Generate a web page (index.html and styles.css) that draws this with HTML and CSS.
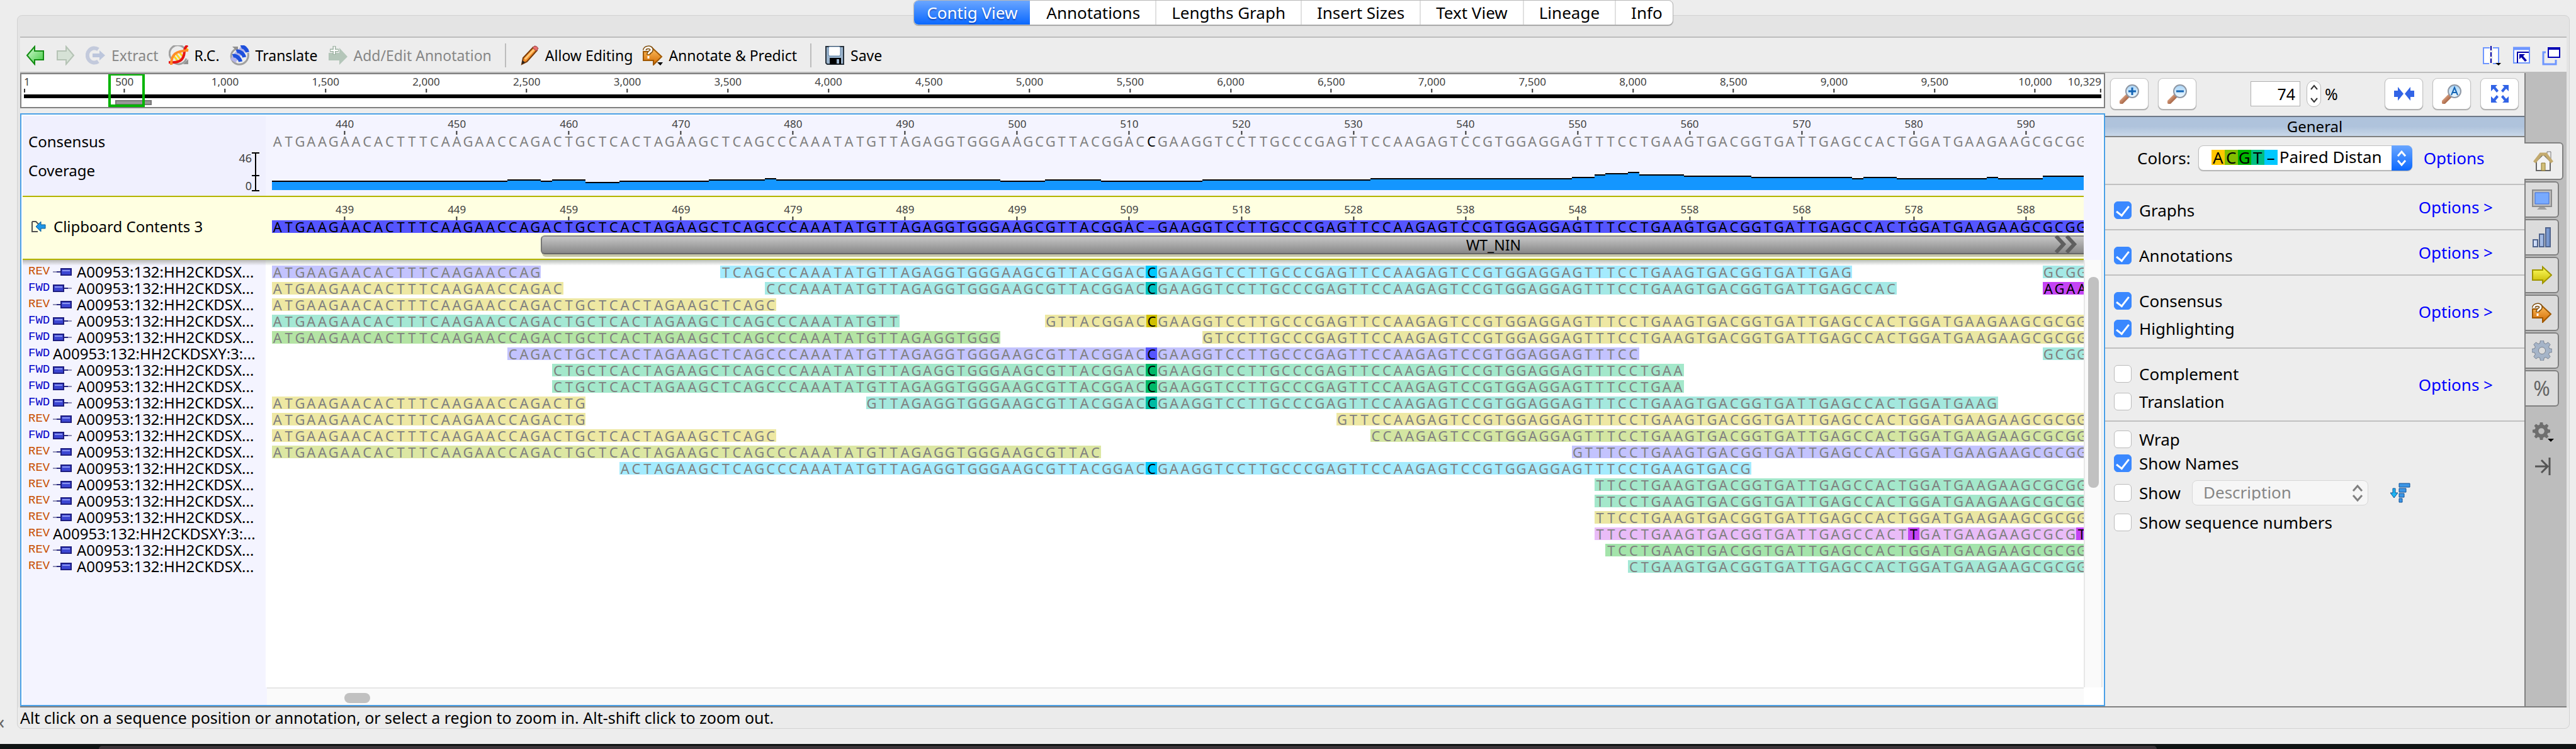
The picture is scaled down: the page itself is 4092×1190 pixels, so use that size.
FILE: index.html
```html
<!DOCTYPE html>
<html lang="en">
<head>
<meta charset="utf-8">
<title>Contig View</title>
<link rel="stylesheet" href="styles.css">
</head>
<body>
<svg class="defs" aria-hidden="true">
  <defs>
    <linearGradient id="gGreen" x1="0" y1="0" x2="1" y2="1"><stop offset="0" stop-color="#d8fbd8"/><stop offset="1" stop-color="#3cc83c"/></linearGradient>
    <linearGradient id="gOrange" x1="0" y1="0" x2="0" y2="1"><stop offset="0" stop-color="#ffc060"/><stop offset="1" stop-color="#d06800"/></linearGradient>
    <linearGradient id="gYellow" x1="0" y1="0" x2="0" y2="1"><stop offset="0" stop-color="#ffff60"/><stop offset="1" stop-color="#c8b800"/></linearGradient>
    <linearGradient id="gBlue" x1="0" y1="0" x2="1" y2="0"><stop offset="0" stop-color="#dce8ff"/><stop offset="1" stop-color="#6a8cc8"/></linearGradient>
    <linearGradient id="gLens" x1="0" y1="0" x2="0" y2="1"><stop offset="0" stop-color="#a8d4f8"/><stop offset="1" stop-color="#f0faff"/></linearGradient>
    <linearGradient id="gHandle" x1="0" y1="0" x2="1" y2="1"><stop offset="0" stop-color="#f0b898"/><stop offset="1" stop-color="#8c4828"/></linearGradient>
    <symbol id="arrow" viewBox="0 0 32 32"><path d="M3 16 15 2v7h14v14H15v7z"/></symbol>
    <symbol id="fwdRead" viewBox="0 0 30 14"><path d="M18 7h12" stroke="#8c8cb4" stroke-width="2"/><path d="M17 7h7" stroke="#282880" stroke-width="2"/><rect x="1" y="2" width="16" height="10" fill="#3c46d2" stroke="#1e1e80" stroke-width="2"/><path d="M3 5h12" stroke="#8c96f0" stroke-width="2"/></symbol>
    <symbol id="revRead" viewBox="0 0 30 14"><path d="M0 7h12" stroke="#8c8cb4" stroke-width="2"/><path d="M6 7h7" stroke="#282880" stroke-width="2"/><rect x="13" y="2" width="16" height="10" fill="#3c46d2" stroke="#1e1e80" stroke-width="2"/><path d="M15 5h12" stroke="#8c96f0" stroke-width="2"/></symbol>
    <symbol id="lens" viewBox="0 0 32 32"><path d="M3 29 14 18" stroke="url(#gHandle)" stroke-width="7" stroke-linecap="round"/><circle cx="20" cy="12" r="10" fill="url(#gLens)" stroke="#9098a4" stroke-width="2"/></symbol>
    <symbol id="gear" viewBox="0 0 32 32"><path fill-rule="evenodd" d="M13.500 0h5l.8 4.300 2.700 1.100 3.600-2.500 3.500 3.500-2.500 3.600 1.100 2.700 4.300.8v5l-4.300.8-1.100 2.700 2.500 3.600-3.500 3.500-3.600-2.500-2.700 1.100-.8 4.300h-5l-.8-4.300-2.700-1.100-3.600 2.500-3.500-3.500 2.500-3.600-1.100-2.700L0 18.500v-5l4.300-.8 1.100-2.700-2.500-3.600 3.500-3.500 3.600 2.500 2.700-1.100zM16 10.500a5.500 5.500 0 1 0 0 11 5.500 5.500 0 0 0 0-11z"/></symbol>
    <symbol id="predict" viewBox="0 0 32 32"><path d="M1 10h14V4l15 14-13 13v-7H1z" fill="url(#gOrange)" stroke="#a05800" stroke-width="2"/><path d="M3 8c0-6 11-6 11-1 0 4-5 3-5 8" fill="none" stroke="#805010" stroke-width="6"/><path d="M3 8c0-6 11-6 11-1 0 4-5 3-5 7M9 17v4" fill="none" stroke="#fff" stroke-width="3"/></symbol>
  </defs>
</svg>

<div class="window">
  <nav class="tabs" aria-label="Views">
    <button class="tab active">Contig View</button><button class="tab">Annotations</button><button class="tab">Lengths Graph</button><button class="tab">Insert Sizes</button><button class="tab">Text View</button><button class="tab">Lineage</button><button class="tab">Info</button>
  </nav>

  <main class="panel">
    <div class="toolbar">
      <button class="tool icon-only" aria-label="Back"><svg viewBox="0 0 32 32"><use href="#arrow" fill="url(#gGreen)" stroke="#148c14" stroke-width="2"/></svg></button>
      <button class="tool icon-only faded" aria-label="Forward" disabled><svg viewBox="0 0 32 32"><g transform="matrix(-1 0 0 1 32 0)"><use href="#arrow" fill="#c8dcc8" stroke="#90a890" stroke-width="2"/></g></svg></button>
      <button class="tool" disabled><svg viewBox="0 0 32 32"><path d="M20 6.500A11 11.500 0 1 0 20 25.500" fill="none" stroke="#c3cadc" stroke-width="6"/><path d="M11 13h11V8l9 8-9 8v-5H11z" fill="#bcc6dc"/></svg>Extract</button>
      <button class="tool"><svg viewBox="0 0 32 32"><path d="M4 21A13 13 0 0 1 25 5M9 28a13 13 0 0 0 19-7" fill="none" stroke="#a0a0a0" stroke-width="3"/><path d="M23 30h8v-8z" fill="#909090"/><path d="m8 17 8 10M12 14l8 10M17 11l7 9M26 3l5 5" stroke="#ffd21e" stroke-width="3"/><path d="M0 27c16 1 24-2 25-17 0-5 2-8 5-10" fill="none" stroke="#e61414" stroke-width="4"/><path d="M4 31C4 14 11 9 31 8" fill="none" stroke="#ff8c28" stroke-width="4"/></svg>R.C.</button>
      <button class="tool"><svg viewBox="0 0 32 32"><path d="M9 6C-1 12 0 26 12 30c12 2 19-8 17-18" fill="none" stroke="#a0a0a0" stroke-width="3"/><path d="M4 2h9v9z" fill="#909090"/><path d="m5 25 4-6m1-1 5-7m2-1 5-5" stroke="#b4b4e6" stroke-width="10"/><path d="M5 17c4-2 11 3 12 9M11 10c4-2 11 3 12 9M18 3c4-2 9 3 10 8" fill="none" stroke="#1e50dc" stroke-width="6"/></svg>Translate</button>
      <button class="tool" disabled><svg viewBox="0 0 32 32"><path d="M1 12h17V4l13 14-13 13v-7H1z" fill="#b4c6b9"/><path d="M10 1v14M3 8h14" stroke="#a0b4a5" stroke-width="5"/><path d="M10 2v12M4 8h12" stroke="#fff" stroke-width="2"/></svg>Add/Edit Annotation</button>
      <span class="divider"></span>
      <button class="tool"><svg viewBox="0 0 32 32"><path d="m4 30 2-10L22 3l6 5-16 18z" fill="#f08c28" stroke="#783c0a" stroke-width="2"/><path d="m9 22 15-16" stroke="#ffc878" stroke-width="3"/><path d="m21 4 3-3c3 0 5 2 6 4l-3 4z" fill="#e66e6e" stroke="#963c3c"/><path d="m4 30 1-6 4 3z" fill="#222"/></svg>Allow Editing</button>
      <button class="tool"><svg viewBox="0 0 32 32"><use href="#predict"/><path d="M23 27h9l-4 5z"/></svg>Annotate &amp; Predict</button>
      <span class="divider"></span>
      <button class="tool"><svg viewBox="0 0 32 32"><path d="M2 2h28v28H4l-2-2z" fill="#9bb4cd" stroke="#28323c" stroke-width="2"/><rect x="6" y="2" width="19" height="15" rx="2" fill="#fff" stroke="#5078a0"/><rect x="8" y="20" width="18" height="10" fill="#000"/><rect x="19" y="22" width="4" height="7" fill="#9bb4cd"/></svg>Save</button>
      <span class="spacer"></span>
      <button class="tool icon-only" aria-label="Split view"><svg viewBox="0 0 32 32"><path d="M14 4H4v25h9M19 4h9v25h-9" fill="#fff" stroke="#6e96ff" stroke-width="2"/><path d="M16 1v30" stroke="#0000aa" stroke-width="2" stroke-dasharray="7 3"/><path d="M23 28h9l-4 4z"/></svg></button>
      <button class="tool icon-only" aria-label="Expand view"><svg viewBox="0 0 32 32"><path d="M4 4h25v24H4z" fill="#fff" stroke="#6e96ff" stroke-width="2"/><path d="M3 5h27" stroke="#6e96ff" stroke-width="5"/><path d="M10 28V11h18" fill="none" stroke="#0000aa" stroke-width="2"/><path d="M13 14h9l-3 3 6 7-3 2-6-7-3 3z" fill="#0000aa"/></svg></button>
      <button class="tool icon-only" aria-label="New window"><svg viewBox="0 0 32 32"><path d="M7 11H3v19h20v-7" fill="none" stroke="#6e96ff" stroke-width="3"/><path d="M11 4h18v15H11z" fill="#fff" stroke="#0000b4" stroke-width="2"/><path d="M10 5h20" stroke="#0000b4" stroke-width="4"/></svg></button>
    </div>

    <div class="workspace">
      <div class="viewer-column">
        <div class="minimap">
          <div class="minimap-scale" id="minimapScale"></div>
          <div class="minimap-line"></div>
          <div class="minimap-annotation"></div>
          <div class="minimap-window"></div>
        </div>

        <div class="viewer">
          <div class="tracks">
            <section class="band consensus">
              <div class="names">
                <div class="name consensus-name">Consensus</div>
                <div class="coverage-name"><span class="coverage-label">Coverage</span>
                  <span class="axis-labels"><span>46</span><span>0</span></span>
                  <svg class="axis" viewBox="0 0 12 62"><path d="M6 1v60M0 1h12M0 37h12M0 61h12" stroke="#000" stroke-width="2"/></svg>
                </div>
              </div>
              <div class="lanes">
                <div class="ruler" id="consensusRuler"></div>
                <div class="row grey" id="consensusRow"></div>
                <div class="coverage" id="coverage"></div>
              </div>
            </section>
            <section class="band reference">
              <div class="names">
                <div class="reference-name"><svg viewBox="0 0 24 18"><path d="M2 1h6l4 4M2 1v16h9" fill="none" stroke="#505050" stroke-width="2"/><path d="m8 9 8-8v5h7v6h-7v5z" fill="#1e96e6" stroke="#0a5a96"/></svg>Clipboard Contents 3</div>
              </div>
              <div class="lanes">
                <div class="ruler" id="referenceRuler"></div>
                <div class="row" id="referenceRow"></div>
                <div class="row annotation-row">
                  <div class="annotation"></div>
                  <span class="annotation-label">WT_NIN</span>
                  <svg class="chevrons" viewBox="0 0 40 28"><path d="m3 1 12 13L3 27m17-26 12 13-12 13" fill="none" stroke="#5f5f5f" stroke-width="6"/></svg>
                </div>
              </div>
            </section>
            <section class="band reads">
              <div class="names" id="readNames"></div>
              <div class="lanes"><div id="readRows"></div></div>
            </section>
            <div class="hscroll"><div class="hscroll-track"><div class="hscroll-thumb"></div></div></div>
          </div>
          <div class="gutter"><div class="vscroll"><div class="vscroll-thumb"></div></div></div>
        </div>
      </div>

      <aside class="sidebar">
        <div class="zoom">
          <button class="key" aria-label="Zoom in"><svg viewBox="0 0 32 32"><use href="#lens"/><path d="M20 6v12M14 12h12" stroke="#1464b4" stroke-width="3"/></svg></button>
          <button class="key" aria-label="Zoom out"><svg viewBox="0 0 32 32"><use href="#lens"/><path d="M14 12h12" stroke="#1464b4" stroke-width="3"/></svg></button>
          <span class="zoom-value">
            <input type="number" id="zoomLevel" value="74">
            <button class="stepper" aria-label="Step"><svg viewBox="0 0 14 32"><path d="m2 9 5-6 5 6M2 23l5 6 5-6" fill="none" stroke="#333" stroke-width="2"/></svg></button>
            <label for="zoomLevel">%</label>
          </span>
          <button class="key" aria-label="Fit selection"><svg viewBox="0 0 32 32"><path d="M0 11h6V5l9 11-9 11v-6H0zM32 11h-6V5l-9 11 9 11v-6h6z" fill="#3264e6"/></svg></button>
          <button class="key" aria-label="Zoom to base level"><svg viewBox="0 0 32 32"><use href="#lens"/><path d="m15 18 5-12 5 12M17 14h6" fill="none" stroke="#1464b4" stroke-width="2"/></svg></button>
          <button class="key" aria-label="Zoom to fit"><svg viewBox="0 0 32 32"><path d="M2 2h10L9 5l5 6-3 3-5-6-4 4zM30 2v10l-4-4-5 6-3-3 5-6-3-3zM2 30V20l4 4 5-6 3 3-5 6 3 3zM30 30H20l3-3-5-6 3-3 5 6 4-4z" fill="#3264e6"/></svg></button>
        </div>
        <h2 class="heading">General</h2>
        <div class="colors">
          <label for="colors">Colors:</label>
          <span class="picker">
            <select id="colors"><option>Paired Distance</option></select>
            <span class="swatch" aria-hidden="true"><i class="sa">A</i><i class="sc">C</i><i class="sg">G</i><i class="st">T</i><i class="sd">–</i></span>
            <svg class="picker-arrows" viewBox="0 0 33 40"><path d="m10 17 6-7 6 7M10 24l6 7 6-7" fill="none" stroke="#fff" stroke-width="3"/></svg>
          </span>
          <a href="#">Options</a>
        </div>
        <div class="group"><div class="checks"><label><input type="checkbox" checked>Graphs</label></div><a href="#">Options &gt;</a></div>
        <div class="group"><div class="checks"><label><input type="checkbox" checked>Annotations</label></div><a href="#">Options &gt;</a></div>
        <div class="group"><div class="checks"><label><input type="checkbox" checked>Consensus</label><label><input type="checkbox" checked>Highlighting</label></div><a href="#">Options &gt;</a></div>
        <div class="group"><div class="checks"><label><input type="checkbox">Complement</label><label><input type="checkbox">Translation</label></div><a href="#">Options &gt;</a></div>
        <div class="layout-options">
          <label><input type="checkbox">Wrap</label>
          <label><input type="checkbox" checked>Show Names</label>
          <div class="show-field">
            <label><input type="checkbox">Show</label>
            <span class="picker disabled">
              <select aria-label="Field" disabled><option>Description</option></select>
              <svg class="picker-arrows" viewBox="0 0 33 40"><path d="m9 17 7-8 7 8M9 24l7 8 7-8" fill="none" stroke="#808080" stroke-width="3"/></svg>
            </span>
            <button class="sort" aria-label="Sort"><svg viewBox="0 0 32 32"><g fill="#3c96e6" stroke="#0f5096"><path d="M4 9h4v7h4l-6 8-6-8h4z" fill="#1eb4f0"/><path d="M14 1h17v6H14zM14 9h11v6H14zM14 17h8v6h-8zM14 25h5v6h-5z"/></g></svg></button>
          </div>
          <label><input type="checkbox">Show sequence numbers</label>
        </div>
      </aside>

      <nav class="rail" aria-label="Option panels">
        <button class="rail-tab active" aria-label="General"><svg viewBox="0 0 32 32"><path d="M22 1h6v14h-6z" fill="#eee" stroke="#777"/><path d="M5 16v15h22V16L16 5z" fill="#f4f4f4" stroke="#666" stroke-width="2"/><path d="m2 18 10-13h8l10 13" fill="none" stroke="#c3aa6e" stroke-width="5"/><path d="M13 19h6v12h-6z" fill="#d2be78" stroke="#8c7832"/></svg></button>
        <button class="rail-tab" aria-label="Display"><svg viewBox="0 0 32 32"><path d="M1 1h30v26H1z" fill="#bebebe" stroke="#8c8c8c" stroke-width="2"/><path d="M5 5h22v18H5z" fill="#78aaff" stroke="#3c6edc"/><path d="M12 28h8l4 4H8z" fill="#a0a0a0"/></svg></button>
        <button class="rail-tab" aria-label="Graphs"><svg viewBox="0 0 32 32"><path d="M2 20h7v11H2zM12 11h7v20h-7zM22 1h7v30h-7z" fill="url(#gBlue)" stroke="#50648c" stroke-width="2"/></svg></button>
        <button class="rail-tab" aria-label="Annotations"><svg viewBox="0 0 32 32"><path d="M1 8h16V3l14 13-14 13v-5H1z" fill="url(#gYellow)" stroke="#a09600" stroke-width="2"/></svg></button>
        <button class="rail-tab" aria-label="Live annotate"><svg viewBox="0 0 32 32"><use href="#predict"/></svg></button>
        <button class="rail-tab" aria-label="Advanced"><svg viewBox="0 0 32 32"><use href="#gear" fill="#a5b4c8" stroke="#788291"/></svg></button>
        <button class="rail-tab percent">%</button>
        <button class="rail-tool" aria-label="Settings"><svg viewBox="0 0 36 32"><use href="#gear" width="28" height="28" fill="#6e6e6e"/><path d="M24 26h10l-5 5z"/></svg></button>
        <button class="rail-tool" aria-label="Collapse"><svg viewBox="0 0 36 32"><path d="M4 16h19M14 6l10 10-10 10M27 2v28" fill="none" stroke="#555" stroke-width="3"/></svg></button>
      </nav>
    </div>
    <p class="status">Alt click on a sequence position or annotation, or select a region to zoom in. Alt-shift click to zoom out.</p>
  </main>
  <span class="collapse-mark">«</span>
</div>
<footer class="desktop"><div class="desktop-window"></div></footer>
<script src="contig.js"></script>
</body>
</html>
```
FILE: styles.css
```css
* { box-sizing: border-box; }
body {
  margin: 0;
  min-height: 100vh;
  display: flex;
  flex-direction: column;
  background: #ededed;
  color: #000;
  font: 24px/26px "Noto Sans", "Open Sans", sans-serif;
}
button, input, select { font: inherit; color: inherit; margin: 0; }
button { border: 0; background: none; padding: 0; }
a { color: #0000ff; text-decoration: none; }
.defs { position: absolute; width: 0; height: 0; }
.spacer { flex: 1; }

.window {
  position: relative;
  flex: 1;
  display: flex;
  flex-direction: column;
  padding: 0 10px 24px 27px;
}

/* View tabs */
.tabs {
  align-self: center;
  display: flex;
  height: 40px;
  margin-bottom: -16px;
  z-index: 1;
  border: 1px solid #b8b8b8;
  border-radius: 8px;
  background: #fff;
  box-shadow: 0 1px 1px #999;
  overflow: hidden;
}
.tab { padding: 0 24px; font-size: 26px; border-left: 2px solid #e0e0e0; }
.tab.active {
  padding: 0 20px;
  border-left: 0;
  color: #fff;
  background: linear-gradient(#6aa6ff, #0a68ff);
  text-shadow: 0 2px 2px rgba(0, 0, 80, 0.4);
}
.tab.active + .tab { border-left-color: #fff; }
.tab:last-child { padding-right: 16px; }

.panel {
  flex: 1;
  display: flex;
  flex-direction: column;
  padding: 33px 4px 0;
  border: 1px solid #d2d2d2;
  border-radius: 8px;
  background: #e4e4e4;
}

/* Toolbar */
.toolbar {
  display: flex;
  align-items: center;
  height: 58px;
  padding: 2px 8px 0;
  gap: 16px;
  background: #ededed;
  border-top: 2px solid #bdbdbd;
  border-bottom: 2px solid #bdbdbd;
  font-size: 23px;
}
.tool { display: flex; align-items: center; gap: 9px; }
.tool svg { width: 32px; height: 32px; }
.tool:disabled { color: #868686; }
.faded svg { opacity: 0.6; }
.divider { width: 2px; height: 38px; margin: 0 5px; background: #bdbdbd; }

.workspace { flex: 1; display: flex; background: #ededed; border-bottom: 2px solid #808080; }
.viewer-column { flex: 1; min-width: 0; display: flex; flex-direction: column; }

/* Whole-sequence overview */
.minimap {
  position: relative;
  height: 56px;
  margin-bottom: 8px;
  border: 2px solid #808080;
  background: #fff;
  padding: 0 4px;
}
.minimap-scale { position: relative; height: 32px; }
.mark {
  position: absolute;
  top: 0;
  display: flex;
  flex-direction: column;
  align-items: center;
  transform: translateX(-50%);
  font-size: 17px;
  line-height: 23px;
  color: #404040;
}
.mark::after { content: ""; width: 2px; height: 6px; background: #333; }
.mark.first { transform: none; align-items: flex-start; }
.mark.last { transform: translateX(-100%); align-items: flex-end; }
.minimap-line { height: 6px; background: #000; }
.minimap-annotation {
  width: 58px;
  height: 8px;
  margin: 3px 0 0 145px;
  background: #999;
  border: 2px solid #777;
}
.minimap-window {
  position: absolute;
  top: 0;
  bottom: 0;
  left: 138px;
  width: 58px;
  border: solid #00b400;
  border-width: 2px 4px 4px;
}

/* Alignment viewer */
.viewer {
  flex: 1;
  display: flex;
  padding: 2px 2px 0;
  background: #fff;
  border: 2px solid #4ba0e6;
}
.tracks { flex: 1; min-width: 0; display: flex; flex-direction: column; }
.band { display: flex; }
.names { flex: none; width: 386px; background: #f4f4ff; }
.lanes { flex: 1; min-width: 0; padding-left: 10px; overflow: hidden; }
.ruler { position: relative; height: 29px; margin-right: -6px; }
.row {
  display: grid;
  grid-template-columns: repeat(162, minmax(0, 1fr));
  height: 20px;
  margin-right: -6px;
}
.run { display: flex; font-size: 22px; line-height: 20px; color: #808080; }
.run b { flex: 1 1 0; min-width: 0; display: flex; justify-content: center; font-weight: 400; }
.run b.diff { color: #000; background: var(--strong); }

.consensus { height: 127px; background: #f4f4ff; }
.consensus .names { background: #f0f0fe; padding: 28px 10px 0 9px; }
.consensus .lanes { padding-top: 1px; }
.consensus-name { height: 30px; }
.coverage-name { display: flex; align-items: center; height: 62px; }
.coverage-label { padding-bottom: 4px; }
.axis-labels {
  flex: 1;
  align-self: stretch;
  display: flex;
  flex-direction: column;
  justify-content: space-between;
  text-align: right;
  font-size: 18px;
  line-height: 18px;
  color: #404040;
}
.axis { width: 12px; height: 62px; }
.coverage {
  display: grid;
  grid-template-columns: repeat(162, minmax(0, 1fr));
  align-items: end;
  height: 68px;
  margin-right: -6px;
}
.coverage i { background: #1496ff; border-top: 2px solid #000; }

.reference {
  height: 102px;
  background: #ffffe1;
  border-top: 2px solid #b4b400;
  border-bottom: 2px solid #b4b400;
}
.reference .names { background: none; }
.reference .lanes { padding-top: 8px; }
.reference-name { display: flex; align-items: center; gap: 12px; padding: 34px 0 0 13px; }
.reference-name svg { width: 24px; height: 18px; }
#referenceRow .run { background: #5555ff; color: #000; }
.annotation-row { height: 36px; padding-top: 4px; }
.annotation {
  grid-area: 1 / 25 / 2 / 163;
  height: 30px;
  border-top: 2px solid #888;
  border-bottom: 2px solid #666;
  border-left: 2px solid #777;
  border-radius: 6px 0 0 6px;
  background: linear-gradient(#c6c6c6, #888);
  box-shadow: 2px 4px 0 #c6c6a8;
}
.annotation-label {
  grid-area: 1 / 107 / 2 / 113;
  justify-self: center;
  font-size: 23px;
  line-height: 30px;
}
.chevrons { grid-area: 1 / 160 / 2 / 163; width: 40px; height: 28px; }

.reads { flex: 1; background: linear-gradient(#b8beb8, #fff 9px); }
.reads .names { background: linear-gradient(#b8b8b8, #f4f4ff 9px); padding: 6px 0 0 9px; }
.reads .lanes { padding-top: 9px; }
.reads .row { margin-bottom: 6px; }
.read-name { display: flex; align-items: center; height: 26px; white-space: nowrap; }
.direction { width: 39px; font: 19px/24px "Liberation Mono", monospace; color: #0000c8; align-self: flex-start; }
.direction.rev { color: #c85000; }
.read-name svg { width: 30px; height: 14px; margin-right: 8px; }

.hscroll { display: flex; height: 28px; padding-left: 388px; background: #f4f4ff; }
.hscroll-track { flex: 1; padding-top: 7px; background: #fafafa; border-top: 2px solid #e6e6e6; }
.hscroll-thumb { width: 41px; height: 16px; margin-left: 123px; border-radius: 8px; background: #c1c1c1; }
.gutter { width: 30px; padding: 229px 0 28px; background: linear-gradient(#f4f4ff 229px, #fff 229px); display: flex; }
.vscroll { flex: 1; background: #fafafa; border: solid #e8e8e8; border-width: 0 2px; padding: 27px 4px 0 5px; }
.vscroll-thumb { height: 335px; border-radius: 8px; background: #c1c1c1; }

/* Option sidebar */
.sidebar { width: 666px; font-size: 26px; }
.zoom { display: flex; align-items: center; gap: 15px; height: 68px; padding: 0 9px 2px 8px; }
.key {
  width: 61px;
  height: 50px;
  display: flex;
  align-items: center;
  justify-content: center;
  border-radius: 8px;
  background: #fff;
  border: 1px solid #c4c4c4;
  box-shadow: 0 1px 1px #999;
}
.key svg { width: 32px; height: 32px; }
.zoom-value { flex: 1; display: flex; align-items: center; padding-left: 71px; font-size: 25px; }
.zoom-value input {
  width: 79px;
  height: 40px;
  padding: 0 7px;
  border: 1px solid #b0b0b0;
  background: #fff;
  text-align: right;
  appearance: textfield;
}
.zoom-value input::-webkit-inner-spin-button { appearance: none; }
.stepper {
  width: 23px;
  height: 42px;
  margin: 0 6px 0 10px;
  border: 1px solid #bbb;
  border-radius: 11px;
  background: #fff;
  display: flex;
  align-items: center;
  justify-content: center;
}
.stepper svg { width: 14px; height: 32px; }
.heading {
  margin: 0;
  height: 34px;
  border-top: 2px solid #6e7887;
  border-bottom: 2px solid #808080;
  background: linear-gradient(#afc3dc 50%, #c8d7e8);
  font-size: 24px;
  font-weight: 400;
  line-height: 30px;
  text-align: center;
}
.colors {
  display: flex;
  align-items: center;
  height: 76px;
  padding: 0 0 8px 51px;
  border-bottom: 2px solid #c0c0c0;
}
.picker { position: relative; display: flex; width: 340px; height: 40px; margin: 0 18px 0 12px; }
.picker select {
  flex: 1;
  min-width: 0;
  appearance: none;
  padding: 0 47px 4px 128px;
  border: 1px solid #c0c0c0;
  border-radius: 8px;
  background: #fff;
  box-shadow: 0 1px 1px #aaa;
}
.swatch { position: absolute; left: 21px; top: 7px; display: flex; line-height: 24px; }
.swatch i { width: 21px; height: 24px; font-style: normal; text-align: center; }
.sa { background: #ffc800; }
.sc { background: #82be00; }
.sg { background: #00b400; }
.st { background: #00be82; }
.sd { background: #00c8ff; }
.picker-arrows {
  position: absolute;
  right: 0;
  width: 33px;
  height: 40px;
  border-radius: 0 8px 8px 0;
  background: linear-gradient(#6aa6ff, #0a68ff);
  pointer-events: none;
}
.group { display: flex; align-items: center; justify-content: space-between; padding-right: 50px; border-bottom: 2px solid #c0c0c0; }
.checks { padding: 18px 0 8px 14px; }
.sidebar label:has(input) { display: flex; align-items: center; gap: 12px; }
.checks label { height: 44px; }
input[type="checkbox"] {
  appearance: none;
  width: 28px;
  height: 28px;
  display: flex;
  justify-content: center;
  border: 1px solid #bbb;
  border-radius: 6px;
  background: #fff;
}
input[type="checkbox"]:checked { border-color: #3a88ff; background: #3a88ff; }
input[type="checkbox"]:checked::before {
  content: "";
  width: 9px;
  height: 17px;
  margin-top: 2px;
  border: solid #fff;
  border-width: 0 3px 3px 0;
  transform: rotate(38deg);
}
.layout-options { padding: 9px 0 0 14px; }
.layout-options label { height: 38px; }
.show-field { display: flex; align-items: center; height: 56px; }
.picker.disabled { width: 280px; margin: 0 35px 0 18px; }
.disabled select { padding: 0 40px 2px 17px; color: #868686; background: #f6f6f6; border-color: #d8d8d8; box-shadow: none; opacity: 1; }
.disabled .picker-arrows { background: none; }
.sort svg { display: block; width: 32px; height: 32px; }

/* Panel rail */
.rail { width: 67px; display: flex; flex-direction: column; align-items: flex-start; padding-top: 110px; background: #bdbdbd; border-left: 2px solid #808080; }
.rail-tab {
  width: 53px;
  height: 58px;
  margin-bottom: 2px;
  display: flex;
  align-items: center;
  justify-content: center;
  border: 2px solid #808080;
  border-left: 0;
  border-radius: 0 6px 6px 0;
  background: #dcdcdc;
}
.rail-tab.active { width: 62px; height: 60px; margin-left: -2px; background: #ededed; }
.rail-tab svg { width: 32px; height: 32px; }
.percent { font-size: 32px; color: #666; }
.rail-tool { margin: 23px 0 0 11px; }
.rail-tool + .rail-tool { margin-top: 22px; }
.rail-tool svg { display: block; width: 36px; height: 32px; }

.status { margin: 0 -4px; padding: 0 4px; height: 33px; font-size: 25px; line-height: 33px; background: #ebebeb; border-radius: 0 0 8px 8px; }
.collapse-mark { position: absolute; left: -8px; bottom: 22px; font-size: 30px; color: #666; }

.desktop { height: 8px; padding: 3px 666px 0 157px; background: #101414; }
.desktop-window { height: 5px; background: #3a3438; border-radius: 6px 6px 0 0; }
```
FILE: contig.js
```js
const COLUMNS = 162;
const CONSENSUS =
  "ATGAAGAACACTTTCAAGAACCAGACTGCTCACTAGAAGCTCAGCCCAAATATGTTAGAG" +
  "GTGGGAAGCGTTACGGACCGAAGGTCCTTGCCCGAGTTCCAAGAGTCCGTGGAGGAGTTT" +
  "CCTGAAGTGACGGTGATTGAGCCACTGGATGAAGAAGCGCGG";
const INSERTION = 78;

const byId = (id) => document.getElementById(id);

function add(parent, tag, className, text) {
  const node = document.createElement(tag);
  if (className) node.className = className;
  if (text) node.textContent = text;
  parent.append(node);
  return node;
}

// Places the bases of columns start..end in a row; diffs maps a column to its differing base.
function addRun(row, start, end, background, diffs = {}, strong = "transparent") {
  const run = add(row, "span", "run");
  run.style.gridColumn = `${start + 1} / ${end + 1}`;
  run.style.background = background;
  run.style.setProperty("--strong", strong);
  for (let i = start; i < end; i++) {
    add(run, "b", i in diffs ? "diff" : "", diffs[i] || CONSENSUS[i]);
  }
}

function addMark(parent, text, percent, extra = "") {
  add(parent, "span", "mark " + extra, text).style.left = percent + "%";
}

// Overview scale
const LENGTH = 10329;
addMark(byId("minimapScale"), "1", 0, "first");
for (let n = 500; n <= 10000; n += 500) {
  addMark(byId("minimapScale"), n.toLocaleString("en-US"), (n / LENGTH) * 100);
}
addMark(byId("minimapScale"), "10,329", 100, "last");

// Rulers; the reference numbering falls one behind after the insertion
for (let i = 6; i < COLUMNS; i += 10) {
  const at = ((i + 0.5) / COLUMNS) * 100;
  addMark(byId("consensusRuler"), String(434 + i), at);
  addMark(byId("referenceRuler"), String((i < INSERTION ? 433 : 432) + i), at);
}

addRun(byId("consensusRow"), 0, COLUMNS, "none", { [INSERTION]: "C" });
addRun(byId("referenceRow"), 0, COLUMNS, "", { [INSERTION]: "–" });

// Coverage: [first column, height]
const COVERAGE = [[0, 15], [21, 17], [24, 15], [25, 17], [28, 13], [31, 15], [39, 17], [44, 19],
  [45, 17], [65, 15], [69, 17], [74, 15], [83, 17], [98, 19], [116, 21], [118, 25], [119, 27],
  [121, 29], [122, 25], [126, 23], [132, 21], [141, 19], [142, 21], [145, 19], [153, 21],
  [154, 19], [158, 23], [COLUMNS, 0]];
COVERAGE.slice(0, -1).forEach(([from, height], k) => {
  for (let i = from; i < COVERAGE[k + 1][0]; i++) {
    add(byId("coverage"), "i").style.height = height + "px";
  }
});

const VIOLET = "#c3c3fe", CYAN = "#a4ebfe", TEAL = "#a4e9e6", KHAKI = "#eee8a3";
const PURPLE = "#c444f4", MINT = "#a4e8cb", C = { [INSERTION]: "C" };
const READS = [
  ["REV", [0, 24, VIOLET], [40, 141, CYAN, C, "#00c8ff"], [158, 162, TEAL]],
  ["FWD", [0, 26, KHAKI], [44, 145, TEAL, C, "#00c0c0"],
    [158, 162, PURPLE, { 158: "A", 159: "G", 160: "A", 161: "A" }]],
  ["REV", [0, 45, KHAKI]],
  ["FWD", [0, 56, "#a4e8d4"], [69, 162, KHAKI, C, "#d0c000"]],
  ["FWD", [0, 65, "#b4e4a4"], [83, 162, "#eae7a2"]],
  ["FWD", [21, 122, VIOLET, C, "#5555ff"], [158, 162, "#a4e8de"]],
  ["FWD", [25, 126, MINT, C, "#00b868"]],
  ["FWD", [25, 126, MINT, C, "#00b868"]],
  ["FWD", [0, 28, KHAKI], [53, 154, "#a4e8de", C, "#00bba4"]],
  ["REV", [0, 28, KHAKI], [95, 162, KHAKI]],
  ["FWD", [0, 45, KHAKI], [98, 162, "#d4e6a2"]],
  ["REV", [0, 74, "#dce7a3"], [116, 162, VIOLET]],
  ["REV", [31, 132, CYAN, C, "#00c8ff"]],
  ["REV", [118, 162, MINT]],
  ["REV", [118, 162, MINT]],
  ["REV", [118, 162, "#eae6a2"]],
  ["REV", [118, 162, "#e9bcf8", { 146: "T", 161: "T" }, PURPLE]],
  ["REV", [119, 162, "#a4e4ab"]],
  ["REV", [121, 162, "#a4e8d6"]],
];
const UNPAIRED = [5, 16];

READS.forEach(([direction, ...runs], index) => {
  const name = add(byId("readNames"), "div", "read-name");
  add(name, "span", "direction " + direction.toLowerCase(), direction);
  if (UNPAIRED.includes(index)) {
    name.append("A00953:132:HH2CKDSXY:3:...");
  } else {
    name.insertAdjacentHTML("beforeend", `<svg><use href="#${direction.toLowerCase()}Read"/></svg>`);
    name.append("A00953:132:HH2CKDSX...");
  }
  const row = add(byId("readRows"), "div", "row");
  runs.forEach((run) => addRun(row, ...run));
});
```
